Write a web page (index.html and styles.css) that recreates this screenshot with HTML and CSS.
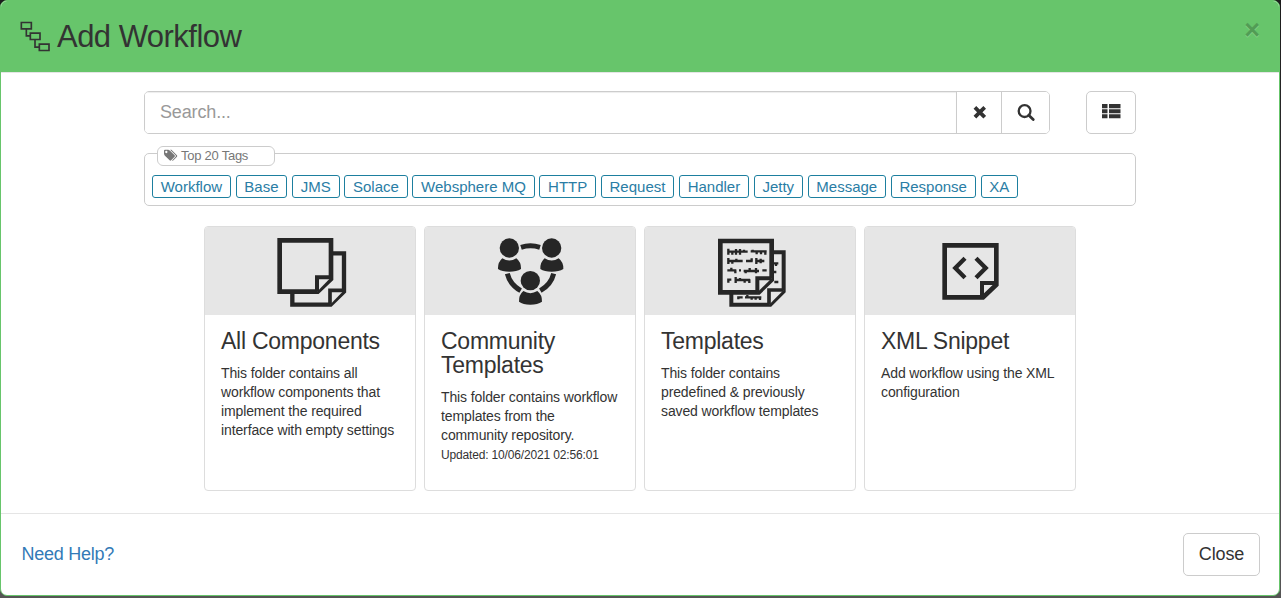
FILE: index.html
```
<!DOCTYPE html>
<html lang="en">
<head>
<meta charset="utf-8">
<title>Add Workflow</title>
<link rel="stylesheet" href="styles.css">
</head>
<body>
<div class="modal">
  <header class="modal-header">
    <svg class="flow-icon" viewBox="60 63 90 92" fill="none" stroke="#333" stroke-width="5">
      <path d="M64 67H94V86H64ZM91 99H120V118H91ZM118 132H147V151H118ZM79 86V107H91M105 118V141H118"/>
    </svg>
    <h1 class="title">Add Workflow</h1>
    <button class="dismiss">×</button>
  </header>

  <main class="modal-body">
    <div class="toolbar">
      <div class="search">
        <input class="search-input" type="text" placeholder="Search...">
        <button class="btn btn-clear">
          <svg width="14" height="14" viewBox="0 0 14 14"><path d="M2.9 1.4L12.7 11.2M12.7 1.4L2.9 11.2" stroke="#333" stroke-width="3.8"/></svg>
        </button>
        <button class="btn btn-search">
          <svg width="18" height="18" viewBox="0 0 18 18" fill="none" stroke="#333"><circle cx="7.6" cy="7.1" r="5.9" stroke-width="2.3"/><path d="M11.8 11.3L16.2 15.5" stroke-width="2.8" stroke-linecap="round"/></svg>
        </button>
      </div>
      <button class="btn btn-view">
        <svg width="19" height="15" viewBox="0 0 19 15" fill="#333"><path d="M0 0H5.5V4.2H0ZM7 0H18.5V4.2H7ZM0 5.2H5.5V9.2H0ZM7 5.2H18.5V9.2H7ZM0 10.2H5.5V14.2H0ZM7 10.2H18.5V14.2H7Z"/></svg>
      </button>
    </div>

    <section class="tags">
      <div class="tags-legend">
        <svg width="14" height="13" viewBox="0 0 14.5 12" fill="#777"><path d="M0 1Q0 0 1 0H4.5L6 .7L11 5.8Q11.8 6.6 11 7.4L7.4 11Q6.6 11.8 5.8 11L.7 6L0 4.5ZM2.4 1.2A1.2 1.2 0 1 0 2.4 3.6A1.2 1.2 0 1 0 2.4 1.2Z" fill-rule="evenodd"/><path d="M6.3 0H7.7L13.4 5.8Q14.2 6.6 13.4 7.4L9.8 11Q9 11.7 8.3 11.1L12 7.4Q12.8 6.6 12 5.8Z"/></svg>
        <span>Top 20 Tags</span>
      </div>
      <div class="tags-list">
        <a class="tag">Workflow</a>
        <a class="tag">Base</a>
        <a class="tag">JMS</a>
        <a class="tag">Solace</a>
        <a class="tag">Websphere MQ</a>
        <a class="tag">HTTP</a>
        <a class="tag">Request</a>
        <a class="tag">Handler</a>
        <a class="tag">Jetty</a>
        <a class="tag">Message</a>
        <a class="tag">Response</a>
        <a class="tag">XA</a>
      </div>
    </section>

    <div class="cards">
      <article class="card">
        <svg class="card-art" viewBox="15 21 630 264" fill="#e6e6e6" stroke="#262626">
          <path stroke-width="13" d="M277 100H432V215L392 254H277Z"/>
          <path stroke-width="11" d="M432 211H390V254"/>
          <path stroke-width="14" d="M239 61H393V177L353 215H239Z"/>
          <path stroke-width="12" d="M393 172H351V215"/>
        </svg>
        <div class="card-body">
          <h2 class="card-title">All Components</h2>
          <p class="card-text">This folder contains all workflow components that implement the required interface with empty settings</p>
        </div>
      </article>
      <article class="card">
        <svg class="card-art" viewBox="15 21 630 264" fill="#262626">
          <g fill="none" stroke="#262626" stroke-width="15"><path d="M303 82Q331 73 360 82"/><path d="M262 161Q270 194 302 212M401 161Q393 194 361 212"/></g>
          <circle cx="268" cy="84" r="29"/><path d="M247 115Q268 128 289 115Q304 127 303 147Q290 155 268 155T234 147Q233 127 247 115Z"/>
          <circle cx="395" cy="84" r="29"/><path d="M374 115Q395 128 416 115Q431 127 430 147Q417 155 395 155T361 147Q360 127 374 115Z"/>
          <circle cx="331" cy="182" r="29"/><path d="M310 213Q331 226 352 213Q367 225 366 245Q353 254 331 254T297 245Q296 225 310 213Z"/>
        </svg>
        <div class="card-body">
          <h2 class="card-title">Community Templates</h2>
          <p class="card-text">This folder contains workflow templates from the community repository.<br><small class="updated">Updated: 10/06/2021 02:56:01</small></p>
        </div>
      </article>
      <article class="card">
        <svg class="card-art" viewBox="15 21 630 264" fill="#e6e6e6" stroke="#262626">
          <path stroke-width="12" d="M274 97H431V214L391 254H274Z"/>
          <path stroke-width="11" d="M431 210H387V254"/>
          <path fill="none" stroke-width="7" d="M402 130H415M408 130V138M400 156H409M403 186H415M295 238V232H308M315 232H364M322 225V232M335 232V239M347 232V239M360 232V240"/>
          <path stroke-width="14" d="M241 63H395V179L356 217H241Z"/>
          <path stroke-width="12" d="M395 175H352V217"/>
          <path fill="none" stroke-width="7" d="M262 95H323M265 86V104M277 95V104M288 87V104M300 87V104M312 89V97M332 94H380M338 89V96M350 94V103M363 94V103M376 94V104M262 123H308M265 114V132M277 123V131M289 116V123M318 123H338M335 115V124M346 123H373M349 114V132M362 116V130M262 151H289M274 143V151M286 151V160M297 151H303M311 153H357M317 149V160M329 144V153M348 144V160M367 151H380M265 188V179H274M284 180H330M287 171V189M300 174V183M314 180V188M328 178V189"/>
        </svg>
        <div class="card-body">
          <h2 class="card-title">Templates</h2>
          <p class="card-text">This folder contains predefined &amp; previously saved workflow templates</p>
        </div>
      </article>
      <article class="card">
        <svg class="card-art" viewBox="15 21 630 264" fill="none" stroke="#262626">
          <path stroke-width="14" d="M254 76H409V194L369 232H254Z"/>
          <path stroke-width="12" d="M409 189H366V232"/>
          <path stroke-width="13" d="M315 115L286 144L315 173M348 115L377 144L348 173"/>
        </svg>
        <div class="card-body">
          <h2 class="card-title">XML Snippet</h2>
          <p class="card-text">Add workflow using the XML configuration</p>
        </div>
      </article>
    </div>
  </main>

  <footer class="modal-footer">
    <a class="help">Need Help?</a>
    <button class="btn btn-close">Close</button>
  </footer>
</div>
</body>
</html>
```
FILE: styles.css
```
* { box-sizing: border-box; }
body {
  margin: 0;
  height: 598px;
  overflow: hidden;
  background: linear-gradient(#1c1c1c, #555 95%);
  font-family: "Liberation Sans", Arial, sans-serif;
  color: #333;
}
h1, h2, p { margin: 0; font-weight: 400; }
button, input { font-family: inherit; color: inherit; }
svg { display: block; flex: none; }

.modal {
  display: flex;
  flex-direction: column;
  width: 1280px;
  height: 596px;
  overflow: hidden;
  background: #fff;
  border: 1px solid #67c56b;
  border-radius: 7px;
}
.modal-header {
  display: flex;
  align-items: center;
  height: 72px;
  padding: 0 19px 0 19px;
  background: #67c56b;
  border-bottom: 1px solid #e5e5e5;
}
.flow-icon { width: 30px; height: 31px; margin-right: 7px; }
.title { font-size: 31px; line-height: 34px; letter-spacing: -.53px; }
.dismiss {
  margin: 0 0 13px auto;
  padding: 0;
  border: 0;
  background: none;
  font-size: 27px;
  font-weight: 700;
  line-height: 27px;
  color: #000;
  opacity: .2;
  text-shadow: 0 1px 0 #fff;
}

.modal-body { height: 440px; padding: 18px 143px 0; }
.toolbar { display: flex; justify-content: space-between; height: 43px; }
.search {
  display: flex;
  width: 906px;
  border: 1px solid #ccc;
  border-radius: 5px;
  overflow: hidden;
}
.search-input {
  flex: 1;
  min-width: 0;
  padding: 0 15px 1px;
  border: 0;
  box-shadow: inset 0 1px 1px rgba(0, 0, 0, .075);
  font-size: 18px;
  letter-spacing: -.15px;
}
.search-input::placeholder { color: #999; }
.btn {
  display: flex;
  align-items: center;
  justify-content: center;
  padding: 0;
  background: #fff;
  border: 1px solid #ccc;
  border-radius: 5px;
}
.btn-clear, .btn-search { border-width: 0 0 0 1px; border-radius: 0; }
.btn-clear { width: 45px; }
.btn-search { width: 48px; }
.btn-view { width: 50px; padding-bottom: 2px; }

.tags {
  height: 53px;
  margin-top: 19px;
  padding: 0 7px;
  border: 1px solid #ccc;
  border-radius: 5px;
}
.tags-legend {
  display: flex;
  align-items: center;
  width: 118px;
  height: 20px;
  margin: -8px 0 9px 5px;
  padding: 0 0 1px 6px;
  gap: 3px;
  background: #fff;
  border: 1px solid #ccc;
  border-radius: 6px;
  font-size: 13px;
  letter-spacing: -.25px;
  color: #777;
}
.tags-list {
  display: flex;
  gap: 4.75px;
  font-size: 15px;
  line-height: 21px;
  white-space: nowrap;
}
.tag {
  height: 23px;
  padding: 0 7.8px 0 7.7px;
  border: 1px solid #1d7f9f;
  border-radius: 3px;
  color: #2a7da5;
}

.cards {
  display: flex;
  justify-content: center;
  gap: 8px;
  margin-top: 20px;
}
.card {
  width: 212px;
  height: 265px;
  border: 1px solid #ddd;
  border-radius: 4px;
  overflow: hidden;
}
.card-art { width: 210px; height: 88px; background: #e6e6e6; }
.card-body { padding: 14px 16px 0 16px; }
.card-title { margin-bottom: 11px; font-size: 23px; line-height: 24px; letter-spacing: -.25px; }
.card-text { font-size: 14px; line-height: 19px; letter-spacing: -.12px; }
.updated { font-size: 12px; letter-spacing: -.16px; }

.modal-footer {
  display: flex;
  align-items: center;
  justify-content: space-between;
  height: 82px;
  padding: 0 19px 0 20.5px;
  border-top: 1px solid #e5e5e5;
  font-size: 18px;
}
.help { color: #337ab7; letter-spacing: -.25px; }
.btn-close { width: 77px; height: 43px; font-size: 18px; letter-spacing: -.15px; }
```
